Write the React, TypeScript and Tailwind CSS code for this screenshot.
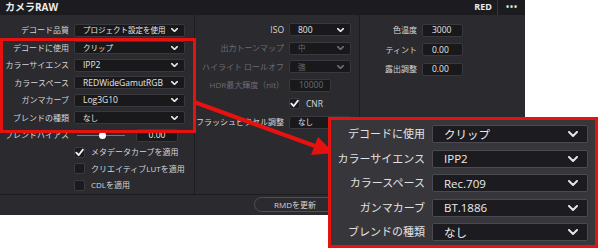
import React from "react";

const RED = "#e6120f";

function Chevron({ w = 7, h = 4, color = "#e4e4e4", sw = 1.6 }: { w?: number; h?: number; color?: string; sw?: number }) {
  return (
    <svg width={w} height={h} viewBox="0 0 10 6" preserveAspectRatio="none" className="shrink-0">
      <polyline points="1,1 5,5 9,1" fill="none" stroke={color} strokeWidth={sw} strokeLinecap="round" strokeLinejoin="round" vectorEffect="non-scaling-stroke" />
    </svg>
  );
}

function Check() {
  return (
    <svg width="9" height="9" viewBox="0 0 10 10">
      <polyline points="1.5,5.2 4,8 8.8,1.8" fill="none" stroke="#f2f2f2" strokeWidth="2" strokeLinecap="round" strokeLinejoin="round" />
    </svg>
  );
}

function Select({ value, width, dim = false, jp = false }: { value: string; width: string; dim?: boolean; jp?: boolean }) {
  return (
    <div className={`${width} h-[13px] flex items-center justify-between pl-[8px] pr-[6px] bg-[#19191c] border border-[#38383e] rounded-[2px] ${jp ? "text-[7.5px]" : "text-[8.5px]"} ${dim ? "text-[#6c6c72]" : "text-[#e6e6e6]"}`}>
      <span className="leading-[12px] whitespace-nowrap">{value}</span>
      <Chevron color={dim ? "#6c6c72" : "#e4e4e4"} />
    </div>
  );
}

function Box({ value, width, dim = false, center = false }: { value: string; width: string; dim?: boolean; center?: boolean }) {
  return (
    <div className={`${width} h-[13px] flex items-center ${center ? "justify-center" : "pl-[9px]"} bg-[#19191c] border border-[#38383e] rounded-[2px] text-[8.5px] leading-[12px] ${dim ? "text-[#6c6c72]" : "text-[#e6e6e6]"}`}>
      {value}
    </div>
  );
}

function CheckBox({ checked, label }: { checked: boolean; label: string }) {
  return (
    <div className="h-[16.5px] flex items-center pl-[74px] gap-[6px]">
      <div className="w-[11px] h-[11px] flex items-center justify-center bg-[#1b1b1f] border border-[#3a3a40] rounded-[2px]">
        {checked && <Check />}
      </div>
      <span className="text-[8px] text-[#d6d6d8] leading-[12px] whitespace-nowrap">{label}</span>
    </div>
  );
}

const col1: [string, string, boolean][] = [
  ["デコード品質", "プロジェクト設定を使用", true],
  ["デコードに使用", "クリップ", true],
  ["カラーサイエンス", "IPP2", false],
  ["カラースペース", "REDWideGamutRGB", false],
  ["ガンマカーブ", "Log3G10", false],
  ["ブレンドの種類", "なし", true],
];

const callout = [
  ["デコードに使用", "クリップ"],
  ["カラーサイエンス", "IPP2"],
  ["カラースペース", "Rec.709"],
  ["ガンマカーブ", "BT.1886"],
  ["ブレンドの種類", "なし"],
];

export default function App() {
  return (
    <div
      className="relative w-[600px] h-[250px] bg-white overflow-hidden"
      style={{ fontFamily: '"Open Sans", "Noto Sans CJK JP", sans-serif' }}
    >
      <div className="w-[525px] h-[215px] flex flex-col bg-[#2a2a2f] text-[#d6d6d8]">
        {/* header */}
        <div className="h-[16px] flex items-center bg-[#1c1c20] pl-[5px] pr-[7px]">
          <span className="text-[10px] font-bold text-[#ececec] leading-[14px]">カメラRAW</span>
          <div className="ml-auto flex items-center h-full">
            <span className="text-[9px] font-bold text-[#ececec] leading-[12px]">RED</span>
            <div className="w-px h-full bg-[#34343a] ml-[5px] mr-[8px]" />
            <span className="text-[8px] font-bold text-[#e0e0e0] leading-[12px] tracking-[1px]">•••</span>
          </div>
        </div>

        {/* body */}
        <div className="flex-1 flex">
          <div className="w-[195px] border-r border-[#1d1d21] pt-[7px]">
            {col1.map(([label, value, jp]) => (
              <div key={label} className="h-[17.5px] flex items-center">
                <span className="w-[69px] text-right text-[8px] leading-[12px] whitespace-nowrap">{label}</span>
                <div className="ml-[5px]">
                  <Select value={value} width="w-[111px]" jp={jp} />
                </div>
              </div>
            ))}
            <div className="h-[17.5px] flex items-center">
              <span className="w-[69px] text-right text-[8px] leading-[12px] whitespace-nowrap">ブレンドバイアス</span>
              <div className="relative ml-[8px] w-[48px] h-px bg-[#77777d]">
                <div className="absolute left-[22px] top-[-3px] w-[7px] h-[7px] rounded-full bg-white" />
              </div>
              <div className="ml-[11px]">
                <Box value="0.00" width="w-[42px]" center />
              </div>
            </div>
            <CheckBox checked label="メタデータカーブを適用" />
            <CheckBox checked={false} label="クリエイティブLUTを適用" />
            <CheckBox checked={false} label="CDLを適用" />
          </div>

          <div className="w-[165px] border-r border-[#1d1d21] pt-[5.75px]">
            <div className="h-[18.5px] flex items-center">
              <span className="w-[89px] text-right text-[8.5px] leading-[12px] whitespace-nowrap">ISO</span>
              <div className="ml-[5px]"><Select value="800" width="w-[62px]" /></div>
            </div>
            <div className="h-[18.5px] flex items-center">
              <span className="w-[89px] text-right text-[8px] leading-[12px] whitespace-nowrap text-[#6c6c72]">出力トーンマップ</span>
              <div className="ml-[5px]"><Select value="中" width="w-[62px]" dim jp /></div>
            </div>
            <div className="h-[18.5px] flex items-center">
              <span className="w-[89px] text-right text-[8px] leading-[12px] whitespace-nowrap text-[#6c6c72]">ハイライト ロールオフ</span>
              <div className="ml-[5px]"><Select value="強" width="w-[62px]" dim jp /></div>
            </div>
            <div className="h-[18.5px] flex items-center">
              <span className="w-[89px] text-right text-[8px] leading-[12px] whitespace-nowrap text-[#6c6c72]">HDR最大輝度（nit）</span>
              <div className="ml-[5px]"><Box value="10000" width="w-[42px]" dim /></div>
            </div>
            <div className="h-[18.5px] flex items-center pl-[94px] gap-[6px]">
              <div className="w-[11px] h-[11px] flex items-center justify-center bg-[#1b1b1f] border border-[#3a3a40] rounded-[2px]">
                <Check />
              </div>
              <span className="text-[8.5px] leading-[12px]">CNR</span>
            </div>
            <div className="h-[18.5px] flex items-center">
              <span className="w-[89px] text-right text-[8px] leading-[12px] whitespace-nowrap">フラッシュピクセル調整</span>
              <div className="ml-[5px]"><Select value="なし" width="w-[62px]" jp /></div>
            </div>
          </div>

          <div className="flex-1 pt-[5.75px]">
            {[
              ["色温度", "3000"],
              ["ティント", "0.00"],
              ["露出調整", "0.00"],
            ].map(([label, value]) => (
              <div key={label} className="h-[19.5px] flex items-center">
                <span className="w-[57px] text-right text-[8px] leading-[12px] whitespace-nowrap">{label}</span>
                <div className="ml-[5px]"><Box value={value} width="w-[41px]" /></div>
              </div>
            ))}
          </div>
        </div>

        {/* footer */}
        <div className="h-[23px] border-t border-[#1d1d21] bg-[#2a2a2f] flex items-center pl-[254px]">
          <div className="w-[82px] h-[15px] rounded-full border border-[#505056] flex items-center justify-center text-[8px] leading-[12px] text-[#d6d6d8]">
            RMDを更新
          </div>
        </div>
      </div>

      {/* highlight box */}
      <div className="absolute left-0 top-[38px] w-[196px] h-[95px] border-[3px] border-[#e6120f]" />

      {/* arrow */}
      <svg className="absolute left-0 top-0 pointer-events-none" width="600" height="250">
        <line x1="194" y1="102" x2="315" y2="146" stroke={RED} strokeWidth="4" />
        <polygon points="334,153 311,155 318,137" fill={RED} />
      </svg>

      {/* zoomed callout */}
      <div className="absolute left-[328px] top-[117px] w-[270px] h-[131px] border-[3px] border-[#e6120f] bg-[#36363b] pt-[2px] flex flex-col">
        {callout.map(([label, value]) => (
          <div key={label} className="h-[24.5px] flex items-center">
            <span className="w-[94px] text-right text-[11px] leading-[14px] whitespace-nowrap text-[#e2e2e4]">{label}</span>
            <div className="ml-[7px] w-[156px] h-[18px] flex items-center justify-between pl-[11px] pr-[9px] bg-[#1c1c20] border border-[#4a4a50] rounded-[2px]">
              <span className="text-[11.5px] leading-[15px] text-[#ececec]">{value}</span>
              <Chevron w={10} h={6} sw={2} />
            </div>
          </div>
        ))}
      </div>
    </div>
  );
}
